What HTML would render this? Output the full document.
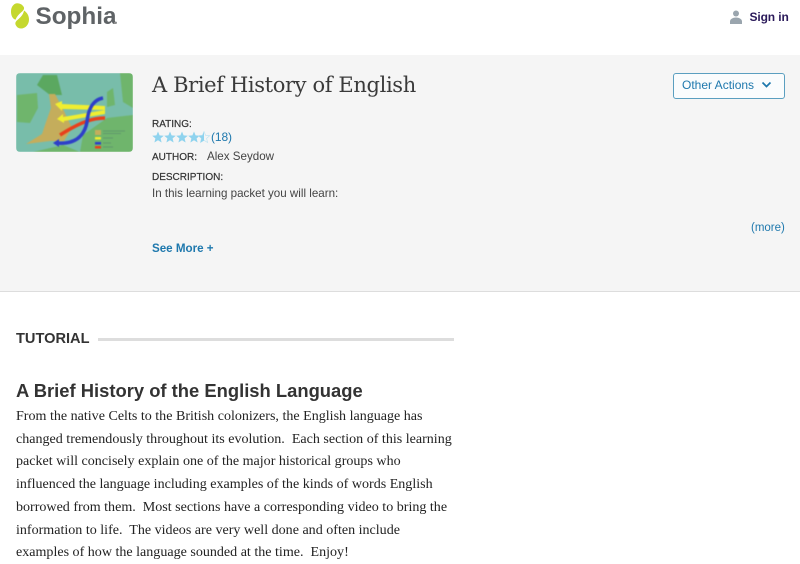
<!DOCTYPE html>
<html><head><meta charset="utf-8">
<style>
html,body{margin:0;padding:0;background:#fff;}
body{width:800px;height:563px;overflow:hidden;position:relative;font-family:"Liberation Sans",sans-serif;}
.a{position:absolute;white-space:nowrap;}
.lab{font-size:10px;font-weight:400;color:#333;-webkit-text-stroke:.2px #333;}
</style></head><body>
<svg class="a" style="left:0;top:0" width="32" height="32" viewBox="0 0 32 32">
<path d="M17 3.2C20 3.2 22.5 4.6 23.8 7C24.6 9 23.5 10.5 21 12.5C18.5 14.5 16.5 17 15.5 19.7C12.5 18.8 11 15.5 11 11.5C11 7 13.5 3.5 17 3.2Z" fill="#c5d82e"/>
<path d="M24 10.5C27 12.5 29 15.5 29 19.5C29 24.5 25.5 28.5 21 28.5C18.5 28.5 16.5 27 15.5 24.5C15 22.5 16 21 18 19.5C21 17 23.5 14 24 10.5Z" fill="#c5d82e"/>
</svg>
<div class="a" style="left:35.5px;top:1px;font-size:24.3px;line-height:32px;font-weight:700;color:#5f6366">Sophia</div>
<div class="a" style="left:113.5px;top:22px;width:2px;height:2px;background:#999;border-radius:50%"></div>
<svg class="a" style="left:729px;top:10px" width="14" height="14" viewBox="0 0 14 14"><circle cx="7" cy="3.5" r="3" fill="#9aa5ae"/><path d="M1 14V11.5C1 9 4 7.5 7 7.5C10 7.5 13 9 13 11.5V14Z" fill="#9aa5ae"/></svg>
<div class="a" style="left:749.5px;top:9px;font-size:12px;line-height:17px;font-weight:700;color:#2b1a5a;letter-spacing:-.12px">Sign in</div>

<div class="a" style="left:0;top:55px;width:800px;height:236px;background:#f5f5f5;border-bottom:1px solid #ddd"></div>

<svg class="a" style="left:16px;top:73px;border-radius:4px" width="117" height="79" viewBox="0 0 117 79">
<g style="filter:blur(.4px)">
<rect width="117" height="79" fill="#78bdaa"/>
<path d="M1 22L21 20L22 35L14 50L1 49Z" fill="#6fb56c"/>
<path d="M27 2L41 2L46 22L34 22L21 12Z" fill="#5ba860"/>
<path d="M104 0H117V35L107 29Z" fill="#6fb56c"/>
<path d="M91 19L97 15L99 32L91 34Z" fill="#6fb56c"/>
<path d="M67 62L91 45L117 42V79H64Z" fill="#6fb56c"/>
<path d="M17 79L47 72L64 79Z" fill="#6fb56c"/>
<path d="M33 21L39 21L48 38L56 55L48 68L34 68L10 71L26 61L30 49L35 35Z" fill="#c4ad5c"/>
<path d="M39 31L46 28L46 31L89 33L89 37L46 36L46 38Z" fill="#f0ee30"/>
<path d="M41 46L47 41L47 44L89 37L89 41L48 48L48 50Z" fill="#f0ee30"/>
<path d="M89 45C78 45 66 48 44 62" fill="none" stroke="#e8401c" stroke-width="3.5"/>
<path d="M87 25C76 27 72 38 71 49C69 60 62 72 40 70" fill="none" stroke="#2e3fc8" stroke-width="3.5"/>
<path d="M37 70L43 66V74Z" fill="#2e3fc8"/>
<rect x="79" y="57" width="6" height="5" fill="#c4ad5c"/><rect x="79" y="64" width="6" height="2.5" fill="#f0ee30"/><rect x="79" y="69" width="6" height="2.5" fill="#2e3fc8"/><rect x="79" y="73" width="6" height="2.5" fill="#e8401c"/>
<path d="M87 58H109M87 60.5H105M87 65H97M87 70H95M87 74H97" stroke="#5c8f6c" stroke-width=".8"/>
</g>
</svg>

<div class="a" style="left:152px;top:69px;font-family:'DejaVu Serif','Liberation Serif',serif;font-size:21px;line-height:32px;color:#3a3a3a;letter-spacing:-.37px">A Brief History of English</div>

<div class="a" style="left:673px;top:73px;width:110px;height:24px;border:1px solid #5b9fc0;border-radius:3px;background:#fafcfd"></div>
<div class="a" style="left:682px;top:77px;font-size:12px;line-height:16px;color:#1e78ad">Other Actions</div>
<svg class="a" style="left:761px;top:81px" width="11" height="8" viewBox="0 0 11 8"><path d="M1.5 1.5L5.5 5.5L9.5 1.5" fill="none" stroke="#1e78ad" stroke-width="1.7"/></svg>

<div class="a lab" style="left:152px;top:118px;line-height:14px">RATING:</div>
<svg class="a" style="left:152px;top:131px" width="59" height="13" viewBox="0 0 59 13">
<g fill="#8fd3ee">
<polygon points="6,0.5 7.6,4.4 11.8,4.7 8.6,7.4 9.6,11.5 6,9.3 2.4,11.5 3.4,7.4 0.2,4.7 4.4,4.4"/>
<polygon transform="translate(12,0)" points="6,0.5 7.6,4.4 11.8,4.7 8.6,7.4 9.6,11.5 6,9.3 2.4,11.5 3.4,7.4 0.2,4.7 4.4,4.4"/>
<polygon transform="translate(24,0)" points="6,0.5 7.6,4.4 11.8,4.7 8.6,7.4 9.6,11.5 6,9.3 2.4,11.5 3.4,7.4 0.2,4.7 4.4,4.4"/>
<polygon transform="translate(36,0)" points="6,0.5 7.6,4.4 11.8,4.7 8.6,7.4 9.6,11.5 6,9.3 2.4,11.5 3.4,7.4 0.2,4.7 4.4,4.4"/>
</g>
<polygon transform="translate(46,0)" points="6,0.5 7.6,4.4 11.8,4.7 8.6,7.4 9.6,11.5 6,9.3 2.4,11.5 3.4,7.4 0.2,4.7 4.4,4.4" fill="none" stroke="#bfe4f2" stroke-width=".7"/>
<path d="M52 1V9.5L48.5 11.5L49.4 7.4L46.5 4.7L50.4 4.4Z" fill="#8fd3ee"/>
</svg>
<div class="a" style="left:211px;top:129px;font-size:12px;line-height:16px;color:#1e78ad;letter-spacing:-.1px">(18)</div>
<div class="a lab" style="left:152px;top:150px;line-height:15px">AUTHOR:</div>
<div class="a" style="left:207px;top:149px;font-size:11.6px;line-height:16px;color:#444">Alex Seydow</div>
<div class="a lab" style="left:152px;top:171px;line-height:14px">DESCRIPTION:</div>
<div class="a" style="left:152px;top:186px;font-size:11.6px;line-height:16px;color:#444">In this learning packet you will learn:</div>
<div class="a" style="left:751px;top:220px;font-size:11.5px;line-height:16px;color:#1e78ad">(more)</div>
<div class="a" style="left:152px;top:241px;font-size:11.6px;line-height:16px;font-weight:700;color:#1e78ad">See More +</div>

<div class="a" style="left:16px;top:330px;font-size:14.6px;line-height:18px;font-weight:700;color:#333">TUTORIAL</div>
<div class="a" style="left:98px;top:338px;width:356px;height:3px;background:#ddd"></div>

<div class="a" style="left:16px;top:379px;font-size:18.4px;line-height:24px;font-weight:700;color:#333">A Brief History of the English Language</div>
<div class="a" style="left:16px;top:405px;font-family:'Liberation Serif',serif;font-size:14.05px;line-height:22.7px;color:#222;white-space:pre">From the native Celts to the British colonizers, the English language has
changed tremendously throughout its evolution.  Each section of this learning
packet will concisely explain one of the major historical groups who
influenced the language including examples of the kinds of words English
borrowed from them.  Most sections have a corresponding video to bring the
information to life.  The videos are very well done and often include
examples of how the language sounded at the time.  Enjoy!</div>
</body></html>
